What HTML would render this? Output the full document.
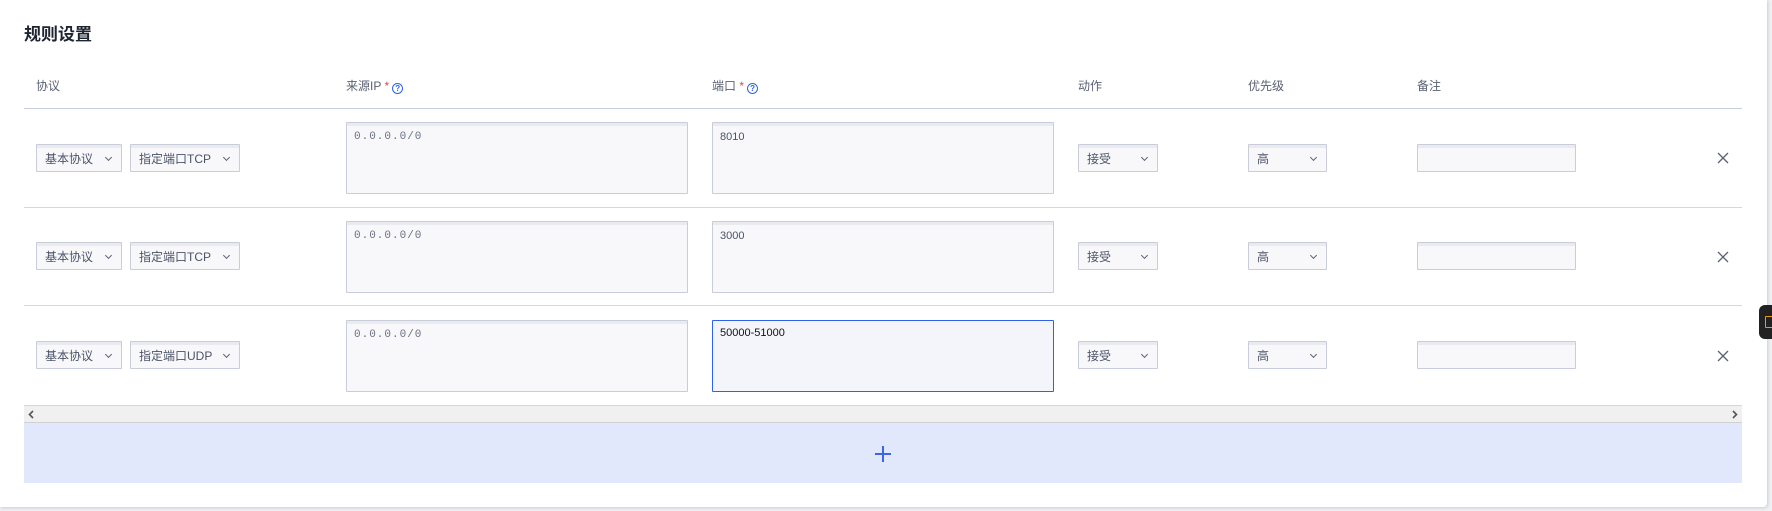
<!DOCTYPE html>
<html><head><meta charset="utf-8"><style>
*{box-sizing:border-box;margin:0;padding:0}
body{width:1772px;height:511px;background:#eef0f3;font-family:"Liberation Sans","Noto Sans CJK SC",sans-serif;color:#4b5366;position:relative;overflow:hidden}
.card{position:absolute;left:0;top:0;width:1767px;height:507px;background:#fff;border-radius:0 0 4px 0;box-shadow:1px 1px 3px rgba(0,0,0,.15)}
.title{position:absolute;left:24px;top:20px;font-size:17px;font-weight:bold;color:#1f2433}
.h{position:absolute;top:77px;font-size:12px;color:#5a6172}
.h .s{color:#e54545}
.q{display:inline-block;width:11px;height:11px;border:1.3px solid #2e63e8;border-radius:50%;color:#2e63e8;font-size:8px;line-height:9px;text-align:center;font-weight:bold;vertical-align:-1px;margin-left:3px}
.line{position:absolute;left:24px;width:1718px;height:1px;background:#d4d8e6}
.sel,.ta,.inp{position:absolute;background:#f8f8fb;border:1px solid #c8cdd9;box-shadow:inset 0 3px 0 #eaebf0;font-size:12px;color:#4b5366;border-radius:1px}
.sel{height:28px;line-height:28px;padding-left:8px}
.sel:after{content:"";position:absolute;right:10px;top:10px;width:4px;height:4px;border-right:1px solid #5b6275;border-bottom:1px solid #5b6275;transform:rotate(45deg)}
.ta{width:342px;height:72px;padding:8px 7px;font-family:"Liberation Mono","Noto Sans CJK SC",monospace;font-size:11px;letter-spacing:1px;color:#6a7182}
.ta.p{font-family:"Liberation Sans",sans-serif;letter-spacing:0;color:#4b5366}
.ta.f{border-color:#2e63e8;background:#f4f5fa;box-shadow:none;color:#111}
.inp{width:159px;height:28px}
.x{position:absolute;left:1717px;width:12px;height:12px}
.sb{position:absolute;left:24px;top:405px;width:1718px;height:18px;background:#f0f0f0;border-top:1px solid #d6d6d6;border-bottom:1px solid #d0d0d6}
.add{position:absolute;left:24px;top:423px;width:1718px;height:60px;background:#e1e8fc}
.add:before{content:"";position:absolute;left:851px;top:30px;width:16px;height:1.5px;background:#3c64e6}
.add:after{content:"";position:absolute;left:858px;top:23px;width:1.5px;height:16px;background:#3c64e6}
.w{position:absolute;left:1759px;top:305px;width:20px;height:34px;background:#222;border-radius:6px}
.w:after{content:"";position:absolute;left:6px;top:11px;width:6px;height:10px;border:1.5px solid #f29a00;border-radius:1px}
</style></head><body>
<div class="card">
<div class="title">规则设置</div>
<div class="h" style="left:36px">协议</div>
<div class="h" style="left:346px">来源IP <span class="s">*</span><span class="q">?</span></div>
<div class="h" style="left:712px">端口 <span class="s">*</span><span class="q">?</span></div>
<div class="h" style="left:1078px">动作</div>
<div class="h" style="left:1248px">优先级</div>
<div class="h" style="left:1417px">备注</div>
<div class="line" style="top:108px;background:#c9cedc"></div>

<div class="sel" style="left:36px;top:144px;width:86px">基本协议</div>
<div class="sel" style="left:130px;top:144px;width:110px">指定端口TCP</div>
<div class="ta" style="left:346px;top:122px">0.0.0.0/0</div>
<div class="ta p" style="left:712px;top:122px">8010</div>
<div class="sel" style="left:1078px;top:144px;width:80px">接受</div>
<div class="sel" style="left:1248px;top:144px;width:79px">高</div>
<div class="inp" style="left:1417px;top:144px"></div>
<svg class="x" style="top:152px" viewBox="0 0 12 12"><path d="M1 1L11 11M11 1L1 11" stroke="#5b6275" stroke-width="1.3"/></svg>
<div class="line" style="top:207px"></div>

<div class="sel" style="left:36px;top:242px;width:86px">基本协议</div>
<div class="sel" style="left:130px;top:242px;width:110px">指定端口TCP</div>
<div class="ta" style="left:346px;top:221px">0.0.0.0/0</div>
<div class="ta p" style="left:712px;top:221px">3000</div>
<div class="sel" style="left:1078px;top:242px;width:80px">接受</div>
<div class="sel" style="left:1248px;top:242px;width:79px">高</div>
<div class="inp" style="left:1417px;top:242px"></div>
<svg class="x" style="top:251px" viewBox="0 0 12 12"><path d="M1 1L11 11M11 1L1 11" stroke="#5b6275" stroke-width="1.3"/></svg>
<div class="line" style="top:305px"></div>

<div class="sel" style="left:36px;top:341px;width:86px">基本协议</div>
<div class="sel" style="left:130px;top:341px;width:110px">指定端口UDP</div>
<div class="ta" style="left:346px;top:320px">0.0.0.0/0</div>
<div class="ta p f" style="left:712px;top:320px;padding-top:6px">50000-51000</div>
<div class="sel" style="left:1078px;top:341px;width:80px">接受</div>
<div class="sel" style="left:1248px;top:341px;width:79px">高</div>
<div class="inp" style="left:1417px;top:341px"></div>
<svg class="x" style="top:350px" viewBox="0 0 12 12"><path d="M1 1L11 11M11 1L1 11" stroke="#5b6275" stroke-width="1.3"/></svg>

<div class="sb"><svg style="position:absolute;left:4px;top:4px" width="6" height="9" viewBox="0 0 6 9"><path d="M5 1L1.5 4.5L5 8" stroke="#555" stroke-width="1.6" fill="none"/></svg><svg style="position:absolute;right:4px;top:4px" width="6" height="9" viewBox="0 0 6 9"><path d="M1 1L4.5 4.5L1 8" stroke="#555" stroke-width="1.6" fill="none"/></svg></div>
<div class="add"></div>
</div>
<div class="w"></div>
</body></html>
